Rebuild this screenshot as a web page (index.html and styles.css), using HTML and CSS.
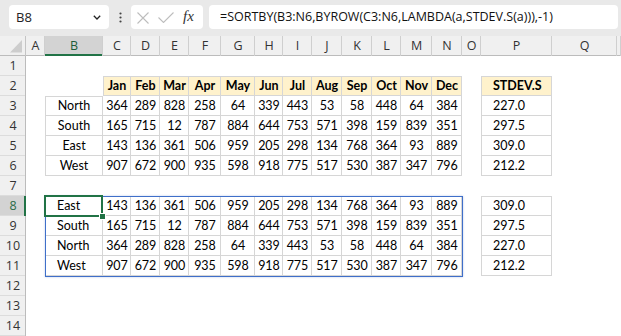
FILE: index.html
```html
<!DOCTYPE html>
<html>
<head>
<meta charset="utf-8">
<link rel="stylesheet" href="styles.css">
</head>
<body>
<div class="fbar">
  <div class="namebox"><span>B8</span><svg class="chev" width="8" height="5" viewBox="0 0 8 5"><path d="M0.8 0.8L4 4L7.2 0.8" fill="none" stroke="#222" stroke-width="1.3"/></svg></div>
  <div class="dots"><svg width="3" height="11" viewBox="0 0 3 11"><circle cx="1.5" cy="1.5" r="1.1"/><circle cx="1.5" cy="5.5" r="1.1"/><circle cx="1.5" cy="9.5" r="1.1"/></svg></div>
  <div class="fxbox">
    <svg class="ic-x" width="12" height="12" viewBox="0 0 12 12"><path d="M0.5 0.5L11.5 11.5M11.5 0.5L0.5 11.5" stroke="#bdbdbd" stroke-width="1.1"/></svg>
    <svg class="ic-ok" width="16" height="11" viewBox="0 0 16 11"><path d="M0.5 5.5L5.5 10.5L15.5 0.5" fill="none" stroke="#bdbdbd" stroke-width="1.1"/></svg>
    <span class="fx">fx</span>
  </div>
  <div class="formula">=SORTBY(B3:N6,BYROW(C3:N6,LAMBDA(a,STDEV.S(a))),-1)</div>
</div>
<div class="sheet">
  <div class="row hdr">
    <div class="corner"><svg width="26" height="20" viewBox="0 0 26 20"><polygon points="22,4 22,16.5 10,16.5" fill="#cdcdcd"/></svg></div>
    <div class="ch">A</div><div class="ch sel">B</div><div class="ch">C</div><div class="ch">D</div><div class="ch">E</div><div class="ch">F</div><div class="ch">G</div><div class="ch">H</div><div class="ch">I</div><div class="ch">J</div><div class="ch">K</div><div class="ch">L</div><div class="ch">M</div><div class="ch">N</div><div class="ch">O</div><div class="ch">P</div><div class="ch">Q</div><div class="ch"></div>
  </div>
  <div class="row"><div class="rh">1</div></div>
  <div class="row"><div class="rh">2</div>
    <div class="c mon g tl cC">Jan</div><div class="c mon g t">Feb</div><div class="c mon g t">Mar</div><div class="c mon g t">Apr</div><div class="c mon g t">May</div><div class="c mon g t">Jun</div><div class="c mon g t">Jul</div><div class="c mon g t">Aug</div><div class="c mon g t">Sep</div><div class="c mon g t">Oct</div><div class="c mon g t">Nov</div><div class="c mon g t">Dec</div>
    <div class="c mon g tl cP lft">STDEV.S</div>
  </div>
  <div class="row"><div class="rh">3</div>
    <div class="c g tl cB">North</div><div class="c g">364</div><div class="c g">289</div><div class="c g">828</div><div class="c g">258</div><div class="c g">64</div><div class="c g">339</div><div class="c g">443</div><div class="c g">53</div><div class="c g">58</div><div class="c g">448</div><div class="c g">64</div><div class="c g">384</div>
    <div class="c g l cP lft">227.0</div>
  </div>
  <div class="row"><div class="rh">4</div>
    <div class="c g l cB">South</div><div class="c g">165</div><div class="c g">715</div><div class="c g">12</div><div class="c g">787</div><div class="c g">884</div><div class="c g">644</div><div class="c g">753</div><div class="c g">571</div><div class="c g">398</div><div class="c g">159</div><div class="c g">839</div><div class="c g">351</div>
    <div class="c g l cP lft">297.5</div>
  </div>
  <div class="row"><div class="rh">5</div>
    <div class="c g l cB">East</div><div class="c g">143</div><div class="c g">136</div><div class="c g">361</div><div class="c g">506</div><div class="c g">959</div><div class="c g">205</div><div class="c g">298</div><div class="c g">134</div><div class="c g">768</div><div class="c g">364</div><div class="c g">93</div><div class="c g">889</div>
    <div class="c g l cP lft">309.0</div>
  </div>
  <div class="row"><div class="rh">6</div>
    <div class="c g l cB">West</div><div class="c g">907</div><div class="c g">672</div><div class="c g">900</div><div class="c g">935</div><div class="c g">598</div><div class="c g">918</div><div class="c g">775</div><div class="c g">517</div><div class="c g">530</div><div class="c g">387</div><div class="c g">347</div><div class="c g">796</div>
    <div class="c g l cP lft">212.2</div>
  </div>
  <div class="row"><div class="rh">7</div></div>
  <div class="row"><div class="rh sel">8</div>
    <div class="c g tl cB lft anchor">East<div class="spill"></div><div class="selbox"><div class="handle"></div></div></div><div class="c g t">143</div><div class="c g t">136</div><div class="c g t">361</div><div class="c g t">506</div><div class="c g t">959</div><div class="c g t">205</div><div class="c g t">298</div><div class="c g t">134</div><div class="c g t">768</div><div class="c g t">364</div><div class="c g t">93</div><div class="c g t">889</div>
    <div class="c g tl cP lft">309.0</div>
  </div>
  <div class="row"><div class="rh">9</div>
    <div class="c g l cB lft">South</div><div class="c g">165</div><div class="c g">715</div><div class="c g">12</div><div class="c g">787</div><div class="c g">884</div><div class="c g">644</div><div class="c g">753</div><div class="c g">571</div><div class="c g">398</div><div class="c g">159</div><div class="c g">839</div><div class="c g">351</div>
    <div class="c g l cP lft">297.5</div>
  </div>
  <div class="row"><div class="rh">10</div>
    <div class="c g l cB lft">North</div><div class="c g">364</div><div class="c g">289</div><div class="c g">828</div><div class="c g">258</div><div class="c g">64</div><div class="c g">339</div><div class="c g">443</div><div class="c g">53</div><div class="c g">58</div><div class="c g">448</div><div class="c g">64</div><div class="c g">384</div>
    <div class="c g l cP lft">227.0</div>
  </div>
  <div class="row"><div class="rh">11</div>
    <div class="c g l cB lft">West</div><div class="c g">907</div><div class="c g">672</div><div class="c g">900</div><div class="c g">935</div><div class="c g">598</div><div class="c g">918</div><div class="c g">775</div><div class="c g">517</div><div class="c g">530</div><div class="c g">387</div><div class="c g">347</div><div class="c g">796</div>
    <div class="c g l cP lft">212.2</div>
  </div>
  <div class="row"><div class="rh">12</div></div>
  <div class="row"><div class="rh">13</div></div>
  <div class="row"><div class="rh">14</div></div>
</div>
</body>
</html>
```
FILE: styles.css
```css
* { box-sizing: border-box; }
body {
  margin: 0;
  width: 621px;
  height: 336px;
  overflow: hidden;
  background: #fff;
  font-family: "Lato", "Open Sans", sans-serif;
}
.fbar {
  height: 36px;
  background: #e9e9e9;
  display: flex;
  align-items: flex-start;
  padding: 5px 0 0 9px;
}
.namebox {
  width: 100px;
  height: 24px;
  background: #fff;
  border-radius: 4px;
  display: flex;
  align-items: center;
  justify-content: space-between;
  padding: 0 8px 0 7px;
  font: 13px "Open Sans", sans-serif;
  color: #222;
}
.chev { margin-top: 1px; }
.dots {
  width: 22px;
  height: 24px;
  display: flex;
  align-items: center;
  justify-content: center;
  fill: #444;
}
.fxbox {
  width: 72px;
  height: 24px;
  background: #fff;
  border-radius: 4px;
  display: flex;
  align-items: center;
}
.ic-x { margin-left: 6px; margin-top: 1px; }
.ic-ok { margin-left: 9px; margin-top: 1px; }
.fx {
  margin-left: 9px;
  font: italic 15px "Liberation Serif", serif;
  color: #333;
  margin-top: -1px;
}
.formula {
  width: 409px;
  height: 24px;
  margin-left: 6px;
  background: #fff;
  border-radius: 4px;
  padding-left: 11px;
  font: 12.5px "Open Sans", sans-serif;
  line-height: 24px;
  color: #111;
  white-space: nowrap;
}
.sheet { display: flex; flex-direction: column; }
.row {
  display: grid;
  grid-template-columns: 26px 19px 58px 28px 29px 29px 32px 34px 28px 29px 30px 30px 29px 31px 30px 19px 71px 65px 1fr;
  height: 20px;
}
.hdr {
  background: #f0f0f0;
  box-shadow: inset 0 -1px 0 #bcbcbc;
}
.corner { box-shadow: inset -1px 0 0 #c4c4c4; height: 20px; }
.corner svg { display: block; }
.ch {
  font: 12.5px "Open Sans", sans-serif;
  color: #333;
  text-align: center;
  line-height: 20px;
  box-shadow: inset -1px 0 0 #cfcfcf;
}
.ch.sel {
  background: #d3d3d3;
  color: #1d5e3a;
  box-shadow: inset -1px 0 0 #cfcfcf, inset 0 -2px 0 #217346;
}
.rh {
  grid-column: 1;
  background: #f0f0f0;
  font: 12.5px "Open Sans", sans-serif;
  color: #333;
  text-align: center;
  line-height: 20px;
  box-shadow: inset -1px 0 0 #bcbcbc, inset 0 -1px 0 #dcdcdc;
}
.rh.sel {
  background: #d3d3d3;
  color: #2c6a47;
  box-shadow: inset -2px 0 0 #217346, inset 0 -1px 0 #dcdcdc;
}
.c {
  font-size: 12.5px;
  line-height: 20px;
  text-align: center;
  color: #000;
  white-space: nowrap;
}
.mon { background: #fff2cc; font-weight: 700; }
.lft { text-align: left; padding-left: 12px; }
.cB { grid-column: 3; }
.cC { grid-column: 4; }
.cP { grid-column: 17; }
.g { box-shadow: inset -1px -1px 0 #d6d6d6; }
.g.t { box-shadow: inset -1px -1px 0 #d6d6d6, inset 0 1px 0 #d6d6d6; }
.g.l { box-shadow: inset -1px -1px 0 #d6d6d6, inset 1px 0 0 #d6d6d6; }
.g.tl { box-shadow: inset -1px -1px 0 #d6d6d6, inset 1px 1px 0 #d6d6d6; }
.anchor { position: relative; }
.spill {
  position: absolute;
  left: 0;
  top: 0;
  width: 418px;
  height: 81px;
  border: 1px solid #3f6fc9;
  box-shadow: 0 0 2px rgba(63, 111, 201, 0.35);
  z-index: 1;
  pointer-events: none;
}
.selbox {
  position: absolute;
  left: -1px;
  top: -1px;
  width: 59px;
  height: 22px;
  border: 2px solid #217346;
  z-index: 2;
}
.handle {
  position: absolute;
  right: -5px;
  bottom: -5px;
  width: 7px;
  height: 7px;
  background: #217346;
  border: 1px solid #fff;
}
```
